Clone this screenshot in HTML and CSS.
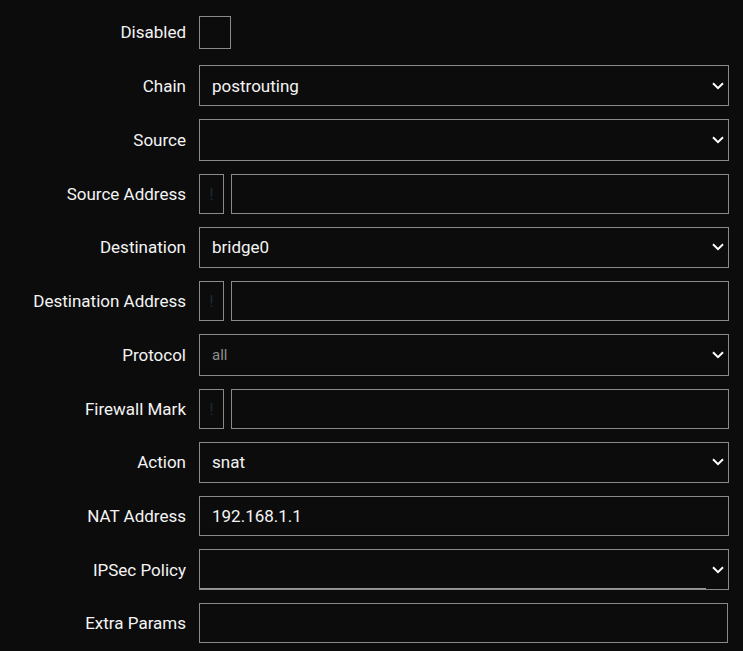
FILE: index.html
```html
<!DOCTYPE html>
<html>
<head>
<meta charset="utf-8">
<link rel="stylesheet" href="styles.css">
</head>
<body>
<div class="form">
  <div class="label">Disabled</div>
  <div class="field field-check"><div class="checkbox"></div></div>

  <div class="label">Chain</div>
  <div class="field"><div class="select"><span class="value">postrouting</span><svg class="chev" width="12" height="8" viewBox="0 0 12 8"><path d="M1 1.2 L6 6.2 L11 1.2" fill="none" stroke="#fff" stroke-width="2"/></svg></div></div>

  <div class="label">Source</div>
  <div class="field"><div class="select"><span class="value"></span><svg class="chev" width="12" height="8" viewBox="0 0 12 8"><path d="M1 1.2 L6 6.2 L11 1.2" fill="none" stroke="#fff" stroke-width="2"/></svg></div></div>

  <div class="label">Source Address</div>
  <div class="field field-pair"><div class="invert">!</div><div class="input wide"></div></div>

  <div class="label">Destination</div>
  <div class="field"><div class="select"><span class="value">bridge0</span><svg class="chev" width="12" height="8" viewBox="0 0 12 8"><path d="M1 1.2 L6 6.2 L11 1.2" fill="none" stroke="#fff" stroke-width="2"/></svg></div></div>

  <div class="label">Destination Address</div>
  <div class="field field-pair"><div class="invert">!</div><div class="input wide"></div></div>

  <div class="label">Protocol</div>
  <div class="field"><div class="select"><span class="value placeholder">all</span><svg class="chev" width="12" height="8" viewBox="0 0 12 8"><path d="M1 1.2 L6 6.2 L11 1.2" fill="none" stroke="#fff" stroke-width="2"/></svg></div></div>

  <div class="label">Firewall Mark</div>
  <div class="field field-pair"><div class="invert">!</div><div class="input wide"></div></div>

  <div class="label">Action</div>
  <div class="field"><div class="select"><span class="value">snat</span><svg class="chev" width="12" height="8" viewBox="0 0 12 8"><path d="M1 1.2 L6 6.2 L11 1.2" fill="none" stroke="#fff" stroke-width="2"/></svg></div></div>

  <div class="label">NAT Address</div>
  <div class="field"><div class="input"><span class="value">192.168.1.1</span></div></div>

  <div class="label">IPSec Policy</div>
  <div class="field"><div class="select ipsec"><span class="value multi"></span><svg class="chev" width="12" height="8" viewBox="0 0 12 8"><path d="M1 1.2 L6 6.2 L11 1.2" fill="none" stroke="#fff" stroke-width="2"/></svg></div></div>

  <div class="label">Extra Params</div>
  <div class="field"><div class="input extra"></div></div>
</div>
</body>
</html>
```

FILE: styles.css
```css
html, body {
  margin: 0;
  padding: 0;
  background: #0c0c0c;
  color: #f4f4f4;
  font-family: Roboto, "Noto Sans", sans-serif;
  font-size: 17px;
}

.form {
  display: grid;
  grid-template-columns: 186px 530px;
  column-gap: 13px;
  row-gap: 13px;
  padding-top: 12px;
}

.label {
  justify-self: end;
  align-self: center;
  white-space: nowrap;
  line-height: 20px;
}

.field {
  display: flex;
  align-items: center;
}

.field-check {
  height: 40px;
}

.checkbox {
  box-sizing: border-box;
  width: 32px;
  height: 33px;
  border: 1px solid #8a8a8a;
}

.select {
  box-sizing: border-box;
  width: 530px;
  height: 41.4px;
  border: 1px solid #8a8a8a;
  display: flex;
  align-items: center;
  justify-content: space-between;
  padding-left: 12px;
  padding-right: 4px;
}

.chev {
  display: block;
  flex: none;
}

.value {
  line-height: 20px;
}

.placeholder {
  color: #8e8e8e;
  font-size: 15px;
}

.input {
  box-sizing: border-box;
  width: 530px;
  height: 40px;
  border: 1px solid #8a8a8a;
  display: flex;
  align-items: center;
  padding-left: 12px;
}

.input.extra {
  width: 529px;
}

.field-pair {
  gap: 7px;
}

.invert {
  box-sizing: border-box;
  width: 25px;
  height: 40px;
  border: 1px solid #8a8a8a;
  display: flex;
  align-items: center;
  justify-content: center;
  color: #1c2a31;
  font-size: 17px;
}

.input.wide {
  width: 498px;
}

.select.ipsec {
  padding-left: 0;
  align-items: stretch;
}

.select.ipsec .multi {
  box-sizing: border-box;
  width: 506px;
  border-bottom: 1px solid #9a9a9a;
}

.select.ipsec .chev {
  align-self: center;
}
```
